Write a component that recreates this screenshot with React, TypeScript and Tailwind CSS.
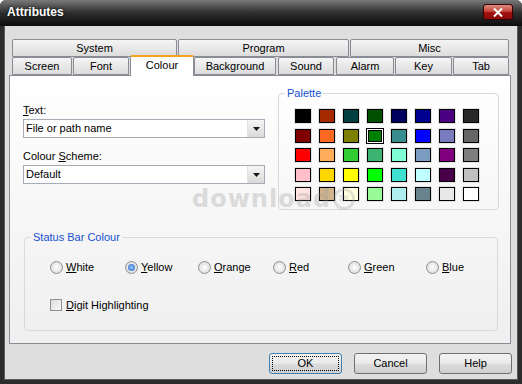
import React from 'react';

// palette colours, row by row
const PALETTE = [
  ['bg-[#000000]', 'bg-[#a52a00]', 'bg-[#004040]', 'bg-[#005000]', 'bg-[#000060]', 'bg-[#000090]', 'bg-[#4b0082]', 'bg-[#282828]'],
  ['bg-[#800000]', 'bg-[#ff6820]', 'bg-[#808000]', 'bg-[#008000]', 'bg-[#388e8e]', 'bg-[#0000ff]', 'bg-[#7b7bc0]', 'bg-[#666666]'],
  ['bg-[#ff0000]', 'bg-[#ffad5b]', 'bg-[#32cd32]', 'bg-[#3cb371]', 'bg-[#7fffd4]', 'bg-[#7a9cc0]', 'bg-[#800080]', 'bg-[#7f7f7f]'],
  ['bg-[#ffc0cb]', 'bg-[#ffd700]', 'bg-[#ffff00]', 'bg-[#00ff00]', 'bg-[#40e0d0]', 'bg-[#c0ffff]', 'bg-[#480048]', 'bg-[#c0c0c0]'],
  ['bg-[#ffe4e1]', 'bg-[#d2b48c]', 'bg-[#ffffe0]', 'bg-[#98fb98]', 'bg-[#afeeee]', 'bg-[#68838b]', 'bg-[#e8e8e8]', 'bg-[#ffffff]'],
];

const RADIOS = [
  { k: 'W', rest: 'hite', w: 'w-[75px]' },
  { k: 'Y', rest: 'ellow', w: 'w-[73px]', checked: true },
  { k: 'O', rest: 'range', w: 'w-[75px]' },
  { k: 'R', rest: 'ed', w: 'w-[75px]' },
  { k: 'G', rest: 'reen', w: 'w-[78px]' },
  { k: 'B', rest: 'lue', w: 'w-[60px]' },
];

const TAB_BASE =
  'h-[18px] flex items-center justify-center border border-[#898c95] rounded-t-[2px] bg-linear-to-b from-[#f5f5f5] to-[#dcdcdc]';

const Tab = ({ label, className = '' }: { label: string; className?: string }) => (
  <div className={`${TAB_BASE} ${className}`}>{label}</div>
);

const Select = ({ value }: { value: string }) => (
  <div className="h-[19px] flex border border-[#a5acb5] bg-white">
    <div className="flex-1 flex items-center pl-[2px]">{value}</div>
    <div className="w-[17px] flex items-center justify-center border-l border-[#e2e2e2] bg-linear-to-b from-[#f6f6f6] to-[#d9d9d9]">
      <svg width="7" height="4" viewBox="0 0 7 4">
        <path d="M0 0h7L3.5 4z" fill="#1a1a1a" />
      </svg>
    </div>
  </div>
);

const Radio = ({ checked }: { checked?: boolean }) => (
  <div className="w-[13px] h-[13px] rounded-full border border-[#8e8f8f] bg-radial from-[#ffffff] to-[#d4d4d4] flex items-center justify-center">
    {checked && <div className="w-[7px] h-[7px] rounded-full bg-radial from-[#9cc8ff] to-[#1c5fc8]" />}
  </div>
);

const Button = ({ label, focused }: { label: string; focused?: boolean }) => (
  <button
    type="button"
    className={`w-[73px] h-[21px] rounded-[3px] border ${
      focused ? 'border-[#3c7fb1]' : 'border-[#707070]'
    } bg-[linear-gradient(#f2f2f2_0%,#ebebeb_48%,#dddddd_52%,#cfcfcf_100%)] p-[2px]`}
  >
    <div className={`h-full flex items-center justify-center ${focused ? 'border border-dotted border-black' : ''}`}>
      {label}
    </div>
  </button>
);

export default function App() {
  return (
    <div className="relative w-[522px] h-[384px] overflow-hidden flex flex-col bg-[#2c2c2c] rounded-t-[6px] text-[11px] text-black font-['Liberation_Sans',Arial,sans-serif]">
      {/* title bar */}
      <div className="h-[26px] shrink-0 flex items-start justify-between pl-[7px] pr-[9px] bg-linear-to-b from-[#7a7a7a] via-[#2e2e2e] to-[#0c0c0c]">
        <span className="mt-[4px] text-[12px] font-bold text-white leading-[16px] [text-shadow:0_0_3px_#000]">Attributes</span>
        <div className="mt-[4px] w-[30px] h-[16px] rounded-[3px] border border-[#3d0000] bg-[linear-gradient(#dd8d84_0%,#c5453a_45%,#a11010_55%,#8a0b0b_100%)] flex items-center justify-center">
          <svg width="10" height="9" viewBox="0 0 10 9">
            <path d="M1 0.5L9 8.5M9 0.5L1 8.5" stroke="#ffffff" strokeWidth="2" />
          </svg>
        </div>
      </div>

      {/* client area */}
      <div className="mx-[4px] mb-[4px] flex-1 flex flex-col bg-[#dedede] border-x border-b border-[#5c5c5c] pt-[13px] pl-[4px] pr-[5px] pb-[5px]">
        <div className="w-[502px] flex flex-col">
          <div className="ml-[3px] flex gap-[1px]">
            <Tab label="System" className="w-[165px]" />
            <Tab label="Program" className="w-[171px]" />
            <Tab label="Misc" className="w-[159px]" />
          </div>
          <div className="ml-[3px] h-[18px] flex items-start">
            <Tab label="Screen" className="w-[60px] mr-[1px]" />
            <Tab label="Font" className="w-[56px] mr-[1px]" />
            <div className="relative z-10 -mt-[2px] w-[64px] h-[21px] flex items-center justify-center pb-[2px] bg-white border border-b-0 border-[#898c95] border-t-2 border-t-[#f7a21e] rounded-t-[2px]">
              Colour
            </div>
            <Tab label="Background" className="w-[82px] mr-[2px]" />
            <Tab label="Sound" className="w-[56px] mr-[2px]" />
            <Tab label="Alarm" className="w-[58px] mr-[1px]" />
            <Tab label="Key" className="w-[57px] mr-[1px]" />
            <Tab label="Tab" className="w-[56px]" />
          </div>

          {/* tab page */}
          <div className="h-[269px] border border-[#898c95] bg-linear-to-b from-[#ffffff] to-[#efefef] flex flex-col">
            <div className="flex items-start">
              <div className="ml-[13px] mt-[27px] w-[242px] flex flex-col">
                <div className="h-[14px] leading-[14px]">
                  <span className="underline">T</span>ext:
                </div>
                <div className="mt-[2px]">
                  <Select value="File or path name" />
                </div>
                <div className="mt-[11px] h-[14px] leading-[14px]">
                  Colour <span className="underline">S</span>cheme:
                </div>
                <div className="mt-[2px]">
                  <Select value="Default" />
                </div>
              </div>

              <fieldset className="ml-[13px] mt-[10px] w-[221px] h-[124px] border border-[#d5dadf] rounded-[4px]">
                <legend className="ml-[6px] px-[2px] h-[14px] leading-[14px] text-[#1550d0]">Palette</legend>
                <div className="pl-[15px] pt-[8px] grid grid-cols-[repeat(8,18px)] gap-x-[6px] gap-y-[3.5px]">
                  {PALETTE.map((row, r) =>
                    row.map((c, i) => {
                      const selected = r === 1 && i === 3;
                      return (
                        <div
                          key={`${r}-${i}`}
                          className={`w-[18px] h-[16px] border ${
                            selected ? 'border-black bg-white p-[1px]' : 'border-[#e4e4e4]'
                          }`}
                        >
                          <div className={`w-full h-full border border-black ${c}`} />
                        </div>
                      );
                    })
                  )}
                </div>
              </fieldset>
            </div>

            <fieldset className="ml-[14px] mt-[20px] w-[474px] h-[101px] border border-[#d5dadf] rounded-[4px]">
              <legend className="ml-[6px] px-[2px] h-[14px] leading-[14px] text-[#1550d0]">Status Bar Colour</legend>
              <div className="pl-[25px]">
                <div className="mt-[16px] flex items-center h-[14px]">
                  {RADIOS.map((r) => (
                    <div key={r.k} className={`${r.w} flex items-center gap-[3px]`}>
                      <Radio checked={r.checked} />
                      <span>
                        <span className="underline">{r.k}</span>
                        {r.rest}
                      </span>
                    </div>
                  ))}
                </div>
                <div className="mt-[24px] flex items-center gap-[4px] h-[14px]">
                  <div className="w-[12px] h-[12px] border border-[#8e8f8f] bg-linear-to-br from-[#dcdcdc] to-[#fafafa]" />
                  <span>
                    <span className="underline">D</span>igit Highlighting
                  </span>
                </div>
              </div>
            </fieldset>
          </div>
        </div>

        <div className="mt-[9px] flex justify-end gap-[12px]">
          <Button label="OK" focused />
          <Button label="Cancel" />
          <Button label="Help" />
        </div>
      </div>

      {/* faint watermark over the page */}
      <div className="pointer-events-none absolute left-[192px] top-[181px] flex items-center gap-[2px] opacity-30">
        <span className="text-[24px] font-bold tracking-[1px] text-[#9a9a9a] font-['DejaVu_Sans',sans-serif]">download</span>
        <div className="w-[22px] h-[22px] rounded-full border-[3px] border-[#a0a0a0] flex items-center justify-center text-[9px] font-bold text-[#a0a0a0]">
          3K
        </div>
      </div>
    </div>
  );
}
